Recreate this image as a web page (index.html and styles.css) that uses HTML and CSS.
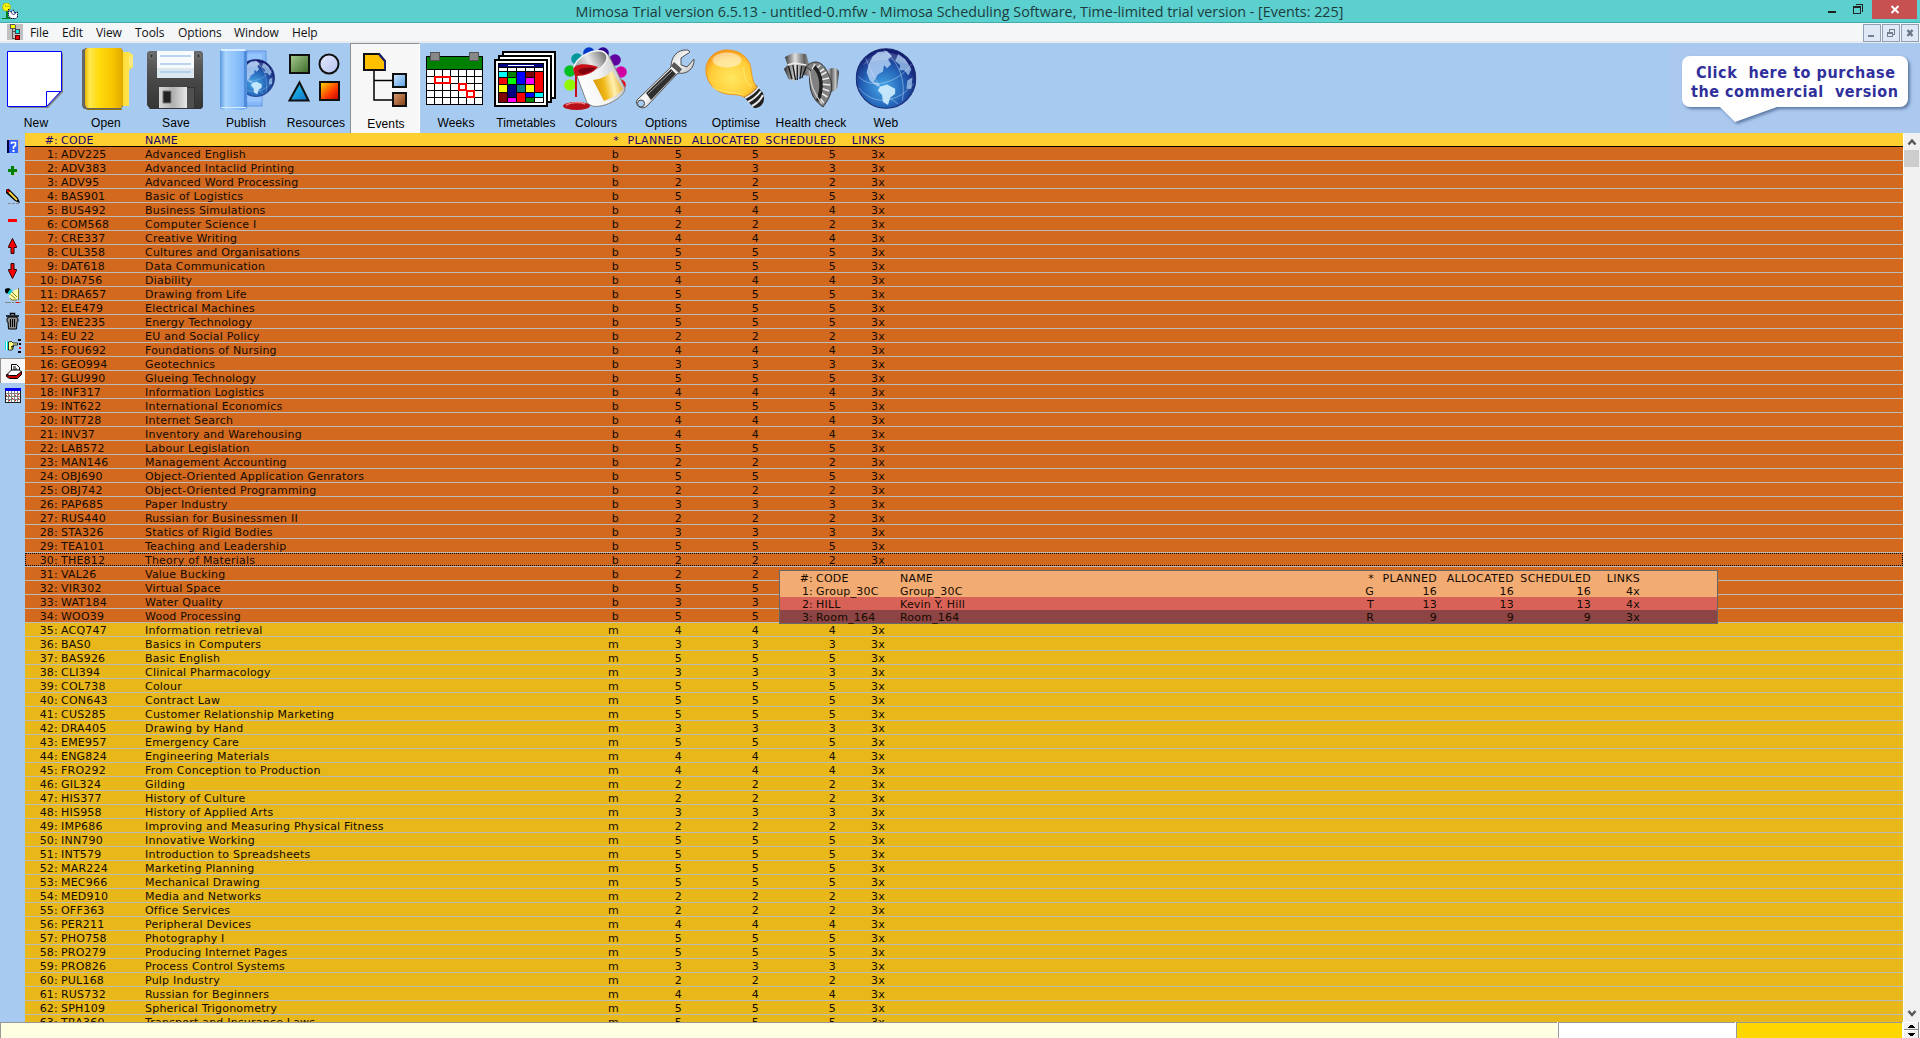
FILE: index.html
```html
<!DOCTYPE html>
<html lang="en">
<head>
<meta charset="utf-8">
<title>Mimosa Scheduling Software</title>
<link rel="stylesheet" href="styles.css">
</head>
<body>
<svg class="defs" width="0" height="0" aria-hidden="true">
  <defs>
    <linearGradient id="gold" x1="0" x2="1" y1="0" y2="0"><stop offset="0" stop-color="#e8b800"/><stop offset=".12" stop-color="#ffe850"/><stop offset=".35" stop-color="#ffdc10"/><stop offset=".7" stop-color="#f8c800"/><stop offset="1" stop-color="#e0a800"/></linearGradient>
    <linearGradient id="tab" x1="0" x2="1" y1="0" y2="0"><stop offset="0" stop-color="#ffdc30"/><stop offset="1" stop-color="#ffe860"/></linearGradient>
    <linearGradient id="disk" x1="0" x2="0" y1="0" y2="1"><stop offset="0" stop-color="#6a6a6a"/><stop offset=".5" stop-color="#484848"/><stop offset="1" stop-color="#353535"/></linearGradient>
    <linearGradient id="silver" x1="0" x2="1" y1="0" y2="0"><stop offset="0" stop-color="#d8d8d8"/><stop offset=".5" stop-color="#b0b0b0"/><stop offset="1" stop-color="#e8e8e8"/></linearGradient>
    <linearGradient id="blueFolder" x1="0" x2="1" y1="0" y2="0"><stop offset="0" stop-color="#5a98e0"/><stop offset=".2" stop-color="#a8d4ff"/><stop offset=".85" stop-color="#7ab4f8"/><stop offset="1" stop-color="#5088d8"/></linearGradient>
    <radialGradient id="globe" cx=".45" cy=".65" r=".62"><stop offset="0" stop-color="#48a8e8"/><stop offset=".55" stop-color="#2464b8"/><stop offset="1" stop-color="#141c70"/></radialGradient>
    <linearGradient id="green" x1="0" y1="0" x2="1" y2="1"><stop offset="0" stop-color="#a8cc90"/><stop offset="1" stop-color="#386828"/></linearGradient>
    <linearGradient id="lilac" x1="0" y1="0" x2="1" y2="1"><stop offset="0" stop-color="#e8ecff"/><stop offset="1" stop-color="#b4c0f0"/></linearGradient>
    <linearGradient id="cyan" x1="0" y1="0" x2="1" y2="1"><stop offset="0" stop-color="#20d0f0"/><stop offset="1" stop-color="#1070c8"/></linearGradient>
    <linearGradient id="fire" x1="0" y1="0" x2="1" y2="1"><stop offset="0" stop-color="#ffe000"/><stop offset=".6" stop-color="#ff3800"/><stop offset="1" stop-color="#c00000"/></linearGradient>
    <linearGradient id="sky" x1="0" y1="0" x2="1" y2="1"><stop offset="0" stop-color="#d0e8ff"/><stop offset="1" stop-color="#58a0e8"/></linearGradient>
    <linearGradient id="brown" x1="0" y1="0" x2="1" y2="1"><stop offset="0" stop-color="#e0a070"/><stop offset="1" stop-color="#803c10"/></linearGradient>
    <linearGradient id="bucket" x1="0" y1=".3" x2="1" y2="0"><stop offset="0" stop-color="#ffffff"/><stop offset=".4" stop-color="#f4f4f4"/><stop offset=".75" stop-color="#d0d0d0"/><stop offset="1" stop-color="#808080"/></linearGradient>
    <linearGradient id="inside" x1="0" y1="0" x2="1" y2="0"><stop offset="0" stop-color="#909090"/><stop offset=".5" stop-color="#e8e8e8"/><stop offset="1" stop-color="#707070"/></linearGradient>
    <linearGradient id="label" x1="0" y1=".2" x2="1" y2="0"><stop offset="0" stop-color="#d89c08"/><stop offset=".3" stop-color="#f0b818"/><stop offset=".6" stop-color="#fff0b0"/><stop offset="1" stop-color="#d89c10"/></linearGradient>
    <radialGradient id="bulb" cx=".5" cy=".6" r=".6"><stop offset="0" stop-color="#ffe860"/><stop offset=".7" stop-color="#ffcc38"/><stop offset="1" stop-color="#f89818"/></radialGradient>
    <linearGradient id="steel" x1="0" y1="0" x2="1" y2="0"><stop offset="0" stop-color="#282828"/><stop offset=".3" stop-color="#e0e0e0"/><stop offset=".55" stop-color="#606060"/><stop offset=".8" stop-color="#c8c8c8"/><stop offset="1" stop-color="#202020"/></linearGradient>
    <linearGradient id="wrench" x1="0" y1="0" x2="1" y2="1"><stop offset="0" stop-color="#a0a0a0"/><stop offset=".5" stop-color="#f8f8f8"/><stop offset="1" stop-color="#585858"/></linearGradient>
    <symbol id="world" viewBox="0 0 60 60">
      <circle cx="30" cy="30" r="29.300" fill="url(#globe)" stroke="#182870"/>
      <path d="M17 8 22 4 31 3 36 8 32 11 35 16 31 20 28 17 27 23 22 26 18 33 24 36 22 38 14 32 11 24 13 16Z" fill="#a8c8f0" opacity=".9"/>
      <path d="M24 38 31 36 39 40 39 45 34 49 32 56 27 53 26 46 22 42Z" fill="#d0eeff" opacity=".9"/>
      <path d="M42 6 49 11 55 21 52 27 48 22 43 22 44 17 39 13ZM51 32 56 29 55 40 50 40Z" fill="#9cc0ec" opacity=".8"/>
      <path d="M3 28C16 42 42 34 55 16M10 10C16 25 25 45 42 55M3 39C18 58 42 54 57 35M28 2C42 14 50 31 46 52" fill="none" stroke="#d8f0ff" stroke-width=".8" opacity=".5"/>
      <path d="M7 17C16 1 44 0 53 17C39 10 21 10 7 17" fill="#fff" opacity=".15"/>
    </symbol>
  </defs>
</svg>

<div class="window">
  <header class="titlebar">
    <svg class="app-icon" width="16" height="16" viewBox="0 0 16 16"><path d="M4 8h2v6h5v2H0v-1h4z" fill="#008020"/><circle cx="4.500" cy="4" r="4" fill="#ff0" stroke="#a09000" stroke-width=".6"/><path d="M3 2.500h1v1H3zM5.500 3h1v1h-1z" fill="#444"/><path d="M6.500 6l2 3 3-2 1 3 3-1v5l-2 1.500h-5l-2-3z" fill="#fff" stroke="#000050" stroke-dasharray="1.500 .7"/><path d="M9 9l1.500 2 1 1 2-2" stroke="#000050" stroke-width=".8" fill="none"/></svg>
    <h1 class="title">Mimosa Trial version 6.5.13 - untitled-0.mfw - Mimosa Scheduling Software, Time-limited trial version - [Events: 225]</h1>
    <svg class="window-controls" width="100" height="22" viewBox="1820 0 100 22" shape-rendering="crispEdges"><path d="M1828 11h8v2h-8z" fill="#222"/><path d="M1853 6h7v7h-7zM1855 4h7v7" fill="none" stroke="#222" transform="translate(.5 .5)"/><path d="M1853 6h8v2h-8z" fill="#222"/><path d="M1872 0h45v19h-45z" fill="#c75050"/><path d="M1891.500 6l7 7m0-7l-7 7" stroke="#fff" stroke-width="2" shape-rendering="auto"/></svg>
  </header>

  <nav class="menubar">
    <svg class="doc-icon" width="16" height="16" viewBox="0 0 16 16" shape-rendering="crispEdges"><path fill="#c0c0c0" d="M0 0h16v16H0z"/><path d="M3 0h4l1 1v3H3z" fill="#ff0" stroke="#555"/><path d="M5 4v10h3M5 7h3" stroke="#555" fill="none"/><path d="M8 5h4v4H8z" fill="#0ee" stroke="#444"/><path d="M8 11h4v4H8z" fill="#e00" stroke="#600"/></svg>
    <ul class="menus"><li class="file">File</li><li class="edit">Edit</li><li class="view">View</li><li class="tools">Tools</li><li class="opts">Options</li><li class="win">Window</li><li>Help</li></ul>
    <div class="mdi">
      <span class="mdi-button"><svg width="16" height="16" viewBox="0 0 16 16" shape-rendering="crispEdges"><path d="M4 10h6v2H4z" fill="#72808e"/></svg></span>
      <span class="mdi-button"><svg width="16" height="16" viewBox="0 0 16 16" shape-rendering="crispEdges"><path d="M4 8h5v3H4zM6 7V4h5v5h-2" fill="none" stroke="#72808e" stroke-width="1" transform="translate(.5 .5)"/><path d="M4 7h6v2H4zM6 4h6v1H6z" fill="#72808e"/></svg></span>
      <span class="mdi-button"><svg width="16" height="16" viewBox="0 0 16 16"><path d="M5.500 5l5 6m0-6l-5 6" stroke="#6a7886" stroke-width="2.400"/></svg></span>
    </div>
  </nav>

  <section class="toolbar">
    <button class="tool"><svg width="70" height="72" viewBox="0 43 70 72"><path d="M9 53h54v39l-15 16H9z" fill="#808080"/><path d="M7.500 51.500h54v39l-15 16h-39z" fill="#fff" stroke="#00f"/><path d="M46.500 106.500v-15h15" fill="none" stroke="#00f"/></svg>New</button>
    <button class="tool"><svg width="70" height="72" viewBox="70 43 70 72"><path d="M122 52h7l4 3v12l-4 3v36h-7z" fill="url(#tab)"/><path d="M82 50l4-2h35l2 3v55l-2 3H84l-2-3z" fill="#666"/><path d="M85 50l2-2h34l2 3v54l-2 3H87l-2-3z" fill="url(#gold)"/><path d="M86 109h37l-2 1H87z" fill="#907000"/><path d="M129 56v11l4-3v-6z" fill="#ffe880"/></svg>Open</button>
    <button class="tool"><svg width="70" height="72" viewBox="140 43 70 72"><path d="M149 51h52l2 2v54l-2 2h-51l-3-4V53z" fill="url(#disk)"/><path d="M157 51h37v27h-37z" fill="#f8fbfd"/><path d="M157 68h37v10h-37z" fill="#dce8f0"/><path d="M160 56h31M160 64h31M160 72h31" stroke="#a8c8e8" stroke-width="1.500"/><path d="M150 54h3v4h-3zM197 54h3v4h-3z" fill="#383838" stroke="#909090" stroke-width=".6"/><path d="M159 87h36v21h-36z" fill="#333"/><path d="M159 87h28v21h-28z" fill="url(#silver)"/><path d="M163 91h8v12h-8z" fill="#222" stroke="#777"/><path d="M187 88h7v20h-7z" fill="#505050"/></svg>Save</button>
    <button class="tool"><svg width="70" height="72" viewBox="210 43 70 72"><path d="M247 51h19v15l-4 4v36h-15z" fill="#88b8f8" stroke="#6095e0"/><path d="M247 54h15v48h-15z" fill="#a0ccff" opacity=".6"/><use href="#world" x="237" y="59" width="38" height="38"/><path d="M220 51l3-2h21l3 2v57l-4 2h-20l-3-2z" fill="url(#blueFolder)"/><path d="M221 49h24l1 2h-25zM221 107h25v1h-25z" fill="#d8eeff"/><path d="M245 51v56" stroke="#3878cc"/></svg>Publish</button>
    <button class="tool"><svg width="70" height="72" viewBox="280 43 70 72"><g stroke="#101010" stroke-width="2"><path d="M290 55h19v18h-19z" fill="url(#green)"/><circle cx="329" cy="64" r="9.500" fill="url(#lilac)"/><path d="M299.500 82.500l9 18h-19z" fill="url(#cyan)"/><path d="M320 82h19v18h-19z" fill="url(#fire)"/></g></svg>Resources</button>
    <button class="tool pressed"><svg width="70" height="72" viewBox="350 43 70 72"><path d="M374 71v29h18M374 80.500h18" stroke="#000" stroke-width="1.500" fill="none"/><path d="M364 54h15l6 7v9h-21z" fill="#ffc000" stroke="#101010" stroke-width="2"/><path d="M379 54l6 7v9" fill="none" stroke="#202070" stroke-width="2"/><path d="M393 74h13v13h-13z" fill="url(#sky)" stroke="#101010" stroke-width="2"/><path d="M393 93h13v13h-13z" fill="url(#brown)" stroke="#101010" stroke-width="2"/></svg>Events</button>
    <button class="tool"><svg width="70" height="72" viewBox="420 43 70 72" shape-rendering="crispEdges"><path d="M426 56h57v49h-57z" fill="#000"/><path d="M427 57h55v12h-55z" fill="green"/><g fill="#fff"><path d="M427 70h7v6h-7zM435 70h7v6h-7zM443 70h7v6h-7zM451 70h7v6h-7zM459 70h7v6h-7zM467 70h7v6h-7zM475 70h7v6h-7z" id="week"/><use href="#week" y="7"/><use href="#week" y="14"/><use href="#week" y="21"/><use href="#week" y="28"/></g><path d="M430 52h9v8h-9zM469 52h9v8h-9z" fill="#888" stroke="#555"/><path d="M435 77h15v6h-15zM459 84h7v6h-7zM467 91h7v6h-7z" fill="none" stroke="red" stroke-width="2"/></svg>Weeks</button>
    <button class="tool"><svg width="70" height="72" viewBox="490 43 70 72" shape-rendering="crispEdges"><g fill="#fff" stroke="#000" stroke-width="2"><path d="M503 52h52v46h-52z"/><path d="M499 56h52v46h-52z"/><path d="M495 60h52v46h-52z"/></g><path d="M498 63h46v40h-46z" fill="#000"/><path d="M499 64h44v3h-44z" fill="#000080"/><path d="M508 65h26v1h-26z" fill="#fff"/><path fill="#fff" d="M499 68h8v3h-8zM508 68h8v3h-8zM517 68h8v3h-8zM526 68h8v3h-8zM535 68h8v3h-8z"/><path fill="#0ff" d="M499 72h8v5h-8zM535 93h8v4h-8z"/><path fill="green" d="M508 72h8v5h-8zM526 98h8v4h-8z"/><path fill="#00f" d="M517 72h8v12h-8zM526 93h8v4h-8z"/><path fill="#800000" d="M526 72h8v5h-8zM499 93h8v9h-8z"/><path fill="red" d="M535 72h8v20h-8zM499 78h8v6h-8zM517 93h8v9h-8z"/><path fill="#0f0" d="M508 78h8v6h-8z"/><path fill="#f0f" d="M526 78h8v6h-8zM508 98h8v4h-8z"/><path fill="#ff0" d="M499 85h8v7h-8zM526 85h8v7h-8z"/><path fill="#000080" d="M508 85h8v12h-8z"/><path fill="teal" d="M517 85h8v7h-8z"/><path fill="#fff" d="M535 98h8v4h-8z"/></svg>Timetables</button>
    <button class="tool"><svg width="70" height="72" viewBox="560 43 70 72"><circle cx="589" cy="53" r="5.800" fill="#0038c8"/><circle cx="603" cy="53" r="5.800" fill="#300090"/><circle cx="577" cy="59" r="5.800" fill="#00989c"/><circle cx="615" cy="60" r="5.800" fill="#6000a0"/><circle cx="570" cy="71" r="5.800" fill="#00c020"/><circle cx="621" cy="72" r="5.800" fill="#d000a0"/><circle cx="570" cy="85" r="5.800" fill="#90f800"/><circle cx="620" cy="85" r="5.800" fill="#f00010"/><path d="M575 71l31-18 3 3 16 32c1 8-20 21-33 18l-5-3z" fill="url(#bucket)" stroke="#808080"/><ellipse cx="590.500" cy="63" rx="18" ry="10" transform="rotate(-28 590.500 63)" fill="url(#inside)" stroke="#f4f4f4" stroke-width="1.500"/><path d="M573 69c3-6 14-6 25-2-5 6-13 9-21 9v21h-2V76z" fill="#c81018"/><path d="M578 70c6-3 12-3 18-2-4 4-10 6-16 6z" fill="#800010"/><path d="M593 80c8-1 14-4 19-9l11 18c-3 5-11 9-19 12z" fill="url(#label)"/><ellipse cx="576.500" cy="106" rx="13.500" ry="4" fill="#b81018"/><path d="M566 105c5-3 14-3 19-1" stroke="#f08080" stroke-width="1.500" fill="none"/></svg>Colours</button>
    <button class="tool"><svg width="70" height="72" viewBox="630 43 70 72"><path d="M637 100l34-33c0-9 5-18 17-17l2 2-9 6v7l6 2 7-8c1 9-7 16-16 14l-31 33c-5 5-13-1-10-6z" fill="url(#wrench)" stroke="#505050"/><path d="M646 93l25-24 5 5-25 26z" fill="#303030"/><path d="M648 94l24-23" stroke="#a0a0a0"/><path d="M674 62l8 7-3 4-8-7z" fill="#585858"/><path d="M677 63l4 5" stroke="#ddd"/><circle cx="641" cy="103.500" r="3.500" fill="#a6caf0" stroke="#444"/></svg>Options</button>
    <button class="tool"><svg width="70" height="72" viewBox="700 43 70 72"><path d="M743 96l13-11 7 8c3 8-1 15-9 15z" fill="#202020"/><path d="M745 98c7-3 10-6 14-11M748 102c6-3 10-7 13-11M752 106c6-3 9-7 11-11" stroke="#e8e8e8" stroke-width="2" fill="none"/><path d="M706 72c-1-13 9-22 21-22 15 0 23 10 24 19 1 8 2 14 6 18-4 5-7 7-13 10-5-3-11-2-17-3-12-2-20-11-21-22z" fill="url(#bulb)" stroke="#ee981c"/><ellipse cx="727" cy="60" rx="14.500" ry="7.500" fill="#fff" opacity=".48"/><path d="M712 87c10 7 21 4 31 8M744 67c-1 8 2 16 8 20" stroke="#fff080" fill="none" opacity=".7"/></svg>Optimise</button>
    <button class="tool wide"><svg width="80" height="72" viewBox="770 43 80 72"><g transform="translate(92.100 0) scale(.887 1)"><path d="M830 69c7-2 11-1 12 3l-2 16c-3 5-12 5-17 2z" fill="url(#steel)"/><path d="M781 57l9-4 15 1 3 9 8 1 6 6-10 7-14-3-6 7-7-2-5-10 4-4z" fill="url(#steel)"/><path d="M785 66l4 13M790 65l3 15M795 65l0 15M800 66l-2 13M805 67l-5 11" stroke="#181818" stroke-width="1.500"/><path d="M784 65l8-2 13 2" stroke="#eee" stroke-width="1.500" fill="none"/><path d="M805 67c9-9 19-5 24 5 7 12 7 21-5 35-6-4-12-9-14-18-2-10-1-17 0-19z" fill="#808080" stroke="#303030"/><path d="M812 69l3-5M815 70l6-5M818 73l7-4M820 76l8-4M821 80l10-2M821 84l11 1M821 88l10 3M820 92l9 5M818 95l7 8" stroke="#eee" stroke-width="1.500"/><path d="M814 67c9 7 10 22 4 34" fill="none" stroke="#202020" stroke-width="4"/><path d="M809 71c1 13 4 22 14 33" stroke="#ccc" stroke-width="1.500" fill="none"/></g></svg>Health check</button>
    <button class="tool"><svg width="70" height="72" viewBox="850 43 70 72"><use href="#world" x="855.500" y="48" width="61" height="61"/></svg>Web</button>
    <div class="promo">
      <svg width="250" height="90" viewBox="1670 43 250 90"><path class="balloon" d="M1690 56h210a8 8 0 0 1 8 8v35a8 8 0 0 1-8 8h-123l-42 15-15-15h-30a8 8 0 0 1-8-8V64a8 8 0 0 1 8-8z"/><text x="1696" y="78" textLength="199">Click&#160; here to purchase</text><text x="1691" y="97" textLength="207">the commercial&#160; version</text></svg>
    </div>
  </section>

  <main class="workspace">
    <aside class="sidebar">
      <span><svg viewBox="0 0 25 25"><path d="M7 6h13v14H7z" fill="#c0c0c0"/><path d="M7 7h2v13H7z" fill="#000040"/><path d="M9 7h9v13H9z" fill="#3060ff"/><path d="M11.500 11V9.500h4v3l-2 1.500v2" fill="none" stroke="#fff" stroke-width="1.600"/><path d="M12.500 17h2v2h-2z" fill="#fff"/></svg></span>
      <span><svg viewBox="0 0 25 25"><path d="M12 9h3v3h3v3h-3v3h-3z" fill="#c0c0c0"/><path d="M11 8h3v3h3v3h-3v3h-3v-3H8v-3h3z" fill="#008000"/></svg></span>
      <span><svg viewBox="0 0 25 25"><path d="M8 20.500h12" stroke="#888" stroke-dasharray="3 1"/><path d="M6 7l1-1 2 0 9 9 2 5-5-2-9-8z" fill="#000"/><path d="M9 9l8 8" stroke="#fd4" stroke-width="1.800"/><path d="M7 7l2 2" stroke="red" stroke-width="1.800"/></svg></span>
      <span><svg viewBox="0 0 25 25"><path d="M8 11h9v3H8z" fill="red"/></svg></span>
      <span><svg viewBox="0 0 25 25"><path d="M12.500 5.500l4 8v1h-2.500v6h-3v-6H8.500v-1z" fill="red" stroke="#300000"/></svg></span>
      <span><svg viewBox="0 0 25 25"><path d="M12.500 20.500l4-8v-1h-2.500v-6h-3v6H8.500v1z" fill="red" stroke="#300000"/></svg></span>
      <span><svg viewBox="0 0 25 25"><path d="M5 6l3-1 3 1-4 5-2-2z" fill="#000"/><path d="M7.500 10l3-4 2 2-3 4z" fill="#0cc"/><path d="M10 11l5-4 3-1v9l-2 2h-5l-2-3z" fill="#ffa"/><path d="M18.500 5v12M10 15l2 2h5M12 9l5 5M10.500 11.500l5 4" stroke="#760" fill="none" stroke-width=".9"/><path d="M5 19.500h16" stroke="#888" stroke-dasharray="6 1 2 1"/><path d="M16 19h3v1h-3z" fill="red"/></svg></span>
      <span><svg viewBox="0 0 25 25"><path d="M10.500 7V5.500h4V7M6 8h13" stroke="#000" fill="none" stroke-width="1.500"/><path d="M8 9h9v1l1 .5v3l-1 .5-.5 7h-8l-.5-7-1-.5v-3l1-.5z" fill="#8c8c8c" stroke="#000"/><path d="M10.500 11v8M12.500 11v8M14.500 11v8" stroke="#000"/></svg></span>
      <span><svg viewBox="0 0 25 25"><path d="M5 8h3v9H5z" fill="#0dd"/><path d="M6 8h1v9H6z" fill="#fff"/><path d="M8.500 9l3-.5L13 10h4.500v2H13v4l-1 1H8.500z" fill="#ff8" stroke="#000" stroke-width=".8"/><path d="M11 13.500h3M11 15h2" stroke="#000" stroke-width=".8"/><path d="M18 6h3v2h-3zM19 10h2v2h-2zM18 18h3v2h-3z" fill="#000"/><path d="M19 14h2v2h-2z" fill="red"/></svg></span>
      <span class="pressed"><svg viewBox="0 0 25 25"><path d="M11.500 6.500h5l3 3v5h-8z" fill="#fff" stroke="#000"/><path d="M13 9h3M13 11h4" stroke="#000"/><path d="M7.500 16l4-4h8l2 2-4 5H9z" fill="#fff" stroke="#000"/><path d="M6.500 16.500l3 1h7l5-4v3l-4 4h-8l-3-2z" fill="#c00" stroke="#000"/></svg></span>
      <span><svg viewBox="0 0 25 25" shape-rendering="crispEdges"><path d="M5 5h16v3H5z" fill="#00e"/><path d="M5 8h16v12H5z" fill="#202020"/><path d="M6 8h14v11H6z" fill="#fff"/><path d="M8 8h1v11H8zM11 8h1v11h-1zM14 8h1v11h-1zM17 8h1v11h-1zM6 10h14v1H6zM6 13h14v1H6zM6 16h14v1H6z" fill="#808080"/><path d="M9 12h1v1H9zM15 12h1v1h-1zM12 15h1v1h-1zM18 15h1v1h-1zM9 17h1v1H9zM15 17h1v1h-1zM6 12h1v1H6zM18 11h1v1h-1z" fill="red"/></svg></span>
    </aside>
    <section class="list">
      <div class="entry heading"><span class="num">#:</span><span>CODE</span><span>NAME</span><span class="r">*</span><span class="r">PLANNED</span><span class="r">ALLOCATED</span><span class="r">SCHEDULED</span><span class="r">LINKS</span></div>
      <div id="events"></div>
    </section>
    <div class="scrollbar">
      <svg width="16" height="17" viewBox="0 0 16 17"><path d="M4.500 11.500l3.500-4 3.500 4" fill="none" stroke="#555" stroke-width="2.400"/></svg>
      <div class="thumb"></div>
      <svg width="16" height="17" viewBox="0 0 16 17"><path d="M4.500 6l3.500 4 3.500-4" fill="none" stroke="#555" stroke-width="2.400"/></svg>
    </div>
    <div class="links-popup">
      <div class="entry caption"><span class="num">#:</span><span>CODE</span><span>NAME</span><span class="r">*</span><span class="r">PLANNED</span><span class="r">ALLOCATED</span><span class="r">SCHEDULED</span><span class="r">LINKS</span></div>
      <div class="entry"><span class="num">1:</span><span>Group_30C</span><span>Group_30C</span><span class="r">G</span><span class="r">16</span><span class="r">16</span><span class="r">16</span><span class="r">4x</span></div>
      <div class="entry teacher"><span class="num">2:</span><span>HILL</span><span>Kevin Y. Hill</span><span class="r">T</span><span class="r">13</span><span class="r">13</span><span class="r">13</span><span class="r">4x</span></div>
      <div class="entry room"><span class="num">3:</span><span>Room_164</span><span>Room_164</span><span class="r">R</span><span class="r">9</span><span class="r">9</span><span class="r">9</span><span class="r">3x</span></div>
    </div>
  </main>

  <footer class="statusbar">
    <div class="pane hint"></div><div class="pane blank"></div><div class="pane goldpane"></div>
    <svg class="spinner" width="17" height="16" viewBox="0 0 17 16" shape-rendering="crispEdges"><path fill="#fff" d="M0 0h17v16H0z"/><path fill="#f0f0f0" d="M1 1h14v6H1zM1 9h14v7H1z"/><path d="M15 0h1v16h-1zM1 7h14v1H1z" fill="#888"/><path d="M7 3h3v1h1v1h1v1H5V5h1V4h1zM5 11h7v1h-1v1h-1v1H7v-1H6v-1H5z" fill="#000"/></svg>
  </footer>
</div>
<script src="events.js"></script>
</body>
</html>
```
FILE: styles.css
```css
* { box-sizing: border-box; }
body { margin: 0; background: #a6caf0; overflow: hidden; }
.defs { position: absolute; }
.window { height: 1038px; display: flex; flex-direction: column; }

.titlebar { height: 23px; flex: none; display: flex; background: #5ccfcf; border-bottom: 1px solid #43adad; justify-content: space-between; }
.app-icon { margin: 3px 81px 0 2px; flex: none; }
.title { margin: 0; font: 400 14.33px/24px "Open Sans", sans-serif; color: #1c3c3c; text-align: center; white-space: pre; }
.window-controls { flex: none; }

.menubar { height: 20px; flex: none; display: flex; background: #f5f6f7; border-bottom: 2px solid #e8ebee; font: 12px/19px "Open Sans", sans-serif; color: #111; }
.doc-icon { margin: 1px 7px 0 7px; flex: none; }
.menus { display: flex; margin: 0; padding: 0; list-style: none; letter-spacing: -.1px; }
.file { width: 32px; } .edit { width: 34px; } .view { width: 39px; } .tools { width: 43px; } .opts { width: 56px; } .win { width: 58px; }
.mdi { display: flex; gap: 1px; margin: 1px 1px 0 auto; height: 18px; }
.mdi-button { width: 18px; height: 18px; border: 1px solid #8fa0b4; background: #dfe9f5; display: flex; }

.toolbar { height: 90px; flex: none; display: flex; background: #a6caf0; }
.tool { width: 70px; height: 90px; padding: 0 0 0 2px; border: 0; background: none; display: flex; flex-direction: column; align-items: center; font: 12px/17px "Liberation Sans", Arial, sans-serif; letter-spacing: .12px; color: #000; white-space: nowrap; flex: none; }
.tool.wide { width: 80px; }
.tool svg { flex: none; margin-left: -2px; }
.tool.pressed { background: #f7f7f7; border-left: 1px solid #909090; border-top: 1px solid #909090; border-right: 1px solid #fff; }
.tool.pressed svg { margin-top: -1px; margin-bottom: 1px; }
.promo { margin-left: auto; width: 250px; background: #abc8ef; }
.promo svg { display: block; }
.balloon { fill: #fff; filter: drop-shadow(2px 2px 1.5px #5c78a4); }
.promo text { font: bold 16px "DejaVu Sans Condensed", "DejaVu Sans", sans-serif; fill: #30309c; }

.workspace { height: 889px; flex: none; display: flex; position: relative; overflow: hidden; }
.sidebar { width: 25px; flex: none; background: #a6caf0; }
.sidebar span { display: block; height: 25px; }
.sidebar svg { display: block; width: 25px; height: 25px; }
.sidebar .pressed { background: #f7f7f7; border-left: 1px solid #909090; border-top: 1px solid #909090; }
.sidebar .pressed svg { margin: -1px 0 0 -1px; }

.list { width: 1878px; flex: none; }
.entry { display: grid; grid-template-columns: 36px 84px 400px 74px 63px 77px 77px 49px; height: 14px; font: 11px/15px "DejaVu Sans", Verdana, sans-serif; letter-spacing: .21px; color: #140a00; white-space: nowrap; background: #d2691e; border-bottom: 1px solid #bbb; }
.num { text-align: right; padding-right: 3px; }
.r { text-align: right; }
.entry.heading { background: #ffcf30; color: #1c0070; border-bottom-color: #000; line-height: 15px; }
.heading .r, .caption .r { letter-spacing: .3px; }
.entry.mandatory { background: #e8b71a; }
.entry.current { position: relative; }
.entry.current::after { content: ""; position: absolute; inset: 0; border: 1px dotted #000; }

.scrollbar { width: 17px; flex: none; background: #f0f0f0; border-left: 1px solid #fff; display: flex; flex-direction: column; }
.thumb { height: 17px; margin-bottom: auto; margin-right: 1px; background: #cdcdcd; }

.links-popup { position: absolute; left: 779px; top: 437px; width: 939px; height: 54px; border: 1px solid #666; background: #f2ab72; }
.links-popup .entry { height: 13px; line-height: 15px; border: 0; background: none; }
.links-popup .teacher { background: #d86258; }
.links-popup .room { background: #8c4444; }

.statusbar { height: 16px; flex: none; display: flex; background: #fff; }
.pane { border-top: 1px solid #999; border-left: 1px solid #999; }
.hint { width: 1557px; margin-right: 1px; background: #ffffe1; }
.blank { width: 177px; margin-right: 1px; background: #fff; }
.goldpane { width: 166px; margin-right: 1px; background: #ffd700; }
```
FILE: events.js
```js
const basic = `ADV225|Advanced English|5
ADV383|Advanced Intaclid Printing|3
ADV95|Advanced Word Processing|2
BAS901|Basic of Logistics|5
BUS492|Business Simulations|4
COM568|Computer Science I|2
CRE337|Creative Writing|4
CUL358|Cultures and Organisations|5
DAT618|Data Communication|5
DIA756|Diability|4
DRA657|Drawing from Life|5
ELE479|Electrical Machines|5
ENE235|Energy Technology|5
EU 22|EU and Social Policy|2
FOU692|Foundations of Nursing|4
GEO994|Geotechnics|3
GLU990|Glueing Technology|5
INF317|Information Logistics|4
INT622|International Economics|5
INT728|Internet Search|4
INV37|Inventory and Warehousing|4
LAB572|Labour Legislation|5
MAN146|Management Accounting|2
OBJ690|Object-Oriented Application Genrators|5
OBJ742|Object-Oriented Programming|2
PAP685|Paper Industry|3
RUS440|Russian for Businessmen II|2
STA326|Statics of Rigid Bodies|3
TEA101|Teaching and Leadership|5
THE812|Theory of Materials|2
VAL26|Value Bucking|2
VIR302|Virtual Space|5
WAT184|Water Quality|3
WOO39|Wood Processing|5`.split("\n");

const mandatory = `ACQ747|Information retrieval|4
BAS0|Basics in Computers|3
BAS926|Basic English|5
CLI394|Clinical Pharmacology|3
COL738|Colour|5
CON643|Contract Law|5
CUS285|Customer Relationship Marketing|5
DRA405|Drawing by Hand|3
EME957|Emergency Care|5
ENG824|Engineering Materials|4
FRO292|From Conception to Production|4
GIL324|Gilding|2
HIS377|History of Culture|2
HIS958|History of Applied Arts|3
IMP686|Improving and Measuring Physical Fitness|2
INN790|Innovative Working|5
INT579|Introduction to Spreadsheets|5
MAR224|Marketing Planning|5
MEC966|Mechanical Drawing|5
MED910|Media and Networks|2
OFF363|Office Services|2
PER211|Peripheral Devices|4
PHO758|Photography I|5
PRO279|Producing Internet Pages|5
PRO826|Process Control Systems|3
PUL168|Pulp Industry|2
RUS732|Russian for Beginners|4
SPH109|Spherical Trigonometry|5
TRA360|Transport and Insurance Laws|5`.split("\n");

const currentEvent = 30;
const container = document.getElementById("events");

[...basic, ...mandatory].forEach((line, index) => {
  const [code, name, hours] = line.split("|");
  const isMandatory = index >= basic.length;
  const row = document.createElement("div");
  row.className = "entry";
  if (isMandatory) row.classList.add("mandatory");
  if (index + 1 === currentEvent) row.classList.add("current");
  const cells = [`${index + 1}:`, code, name, isMandatory ? "m" : "b", hours, hours, hours, "3x"];
  cells.forEach((text, column) => {
    const cell = document.createElement("span");
    if (column === 0) cell.className = "num";
    if (column > 2) cell.className = "r";
    cell.textContent = text;
    row.append(cell);
  });
  container.append(row);
});
```
